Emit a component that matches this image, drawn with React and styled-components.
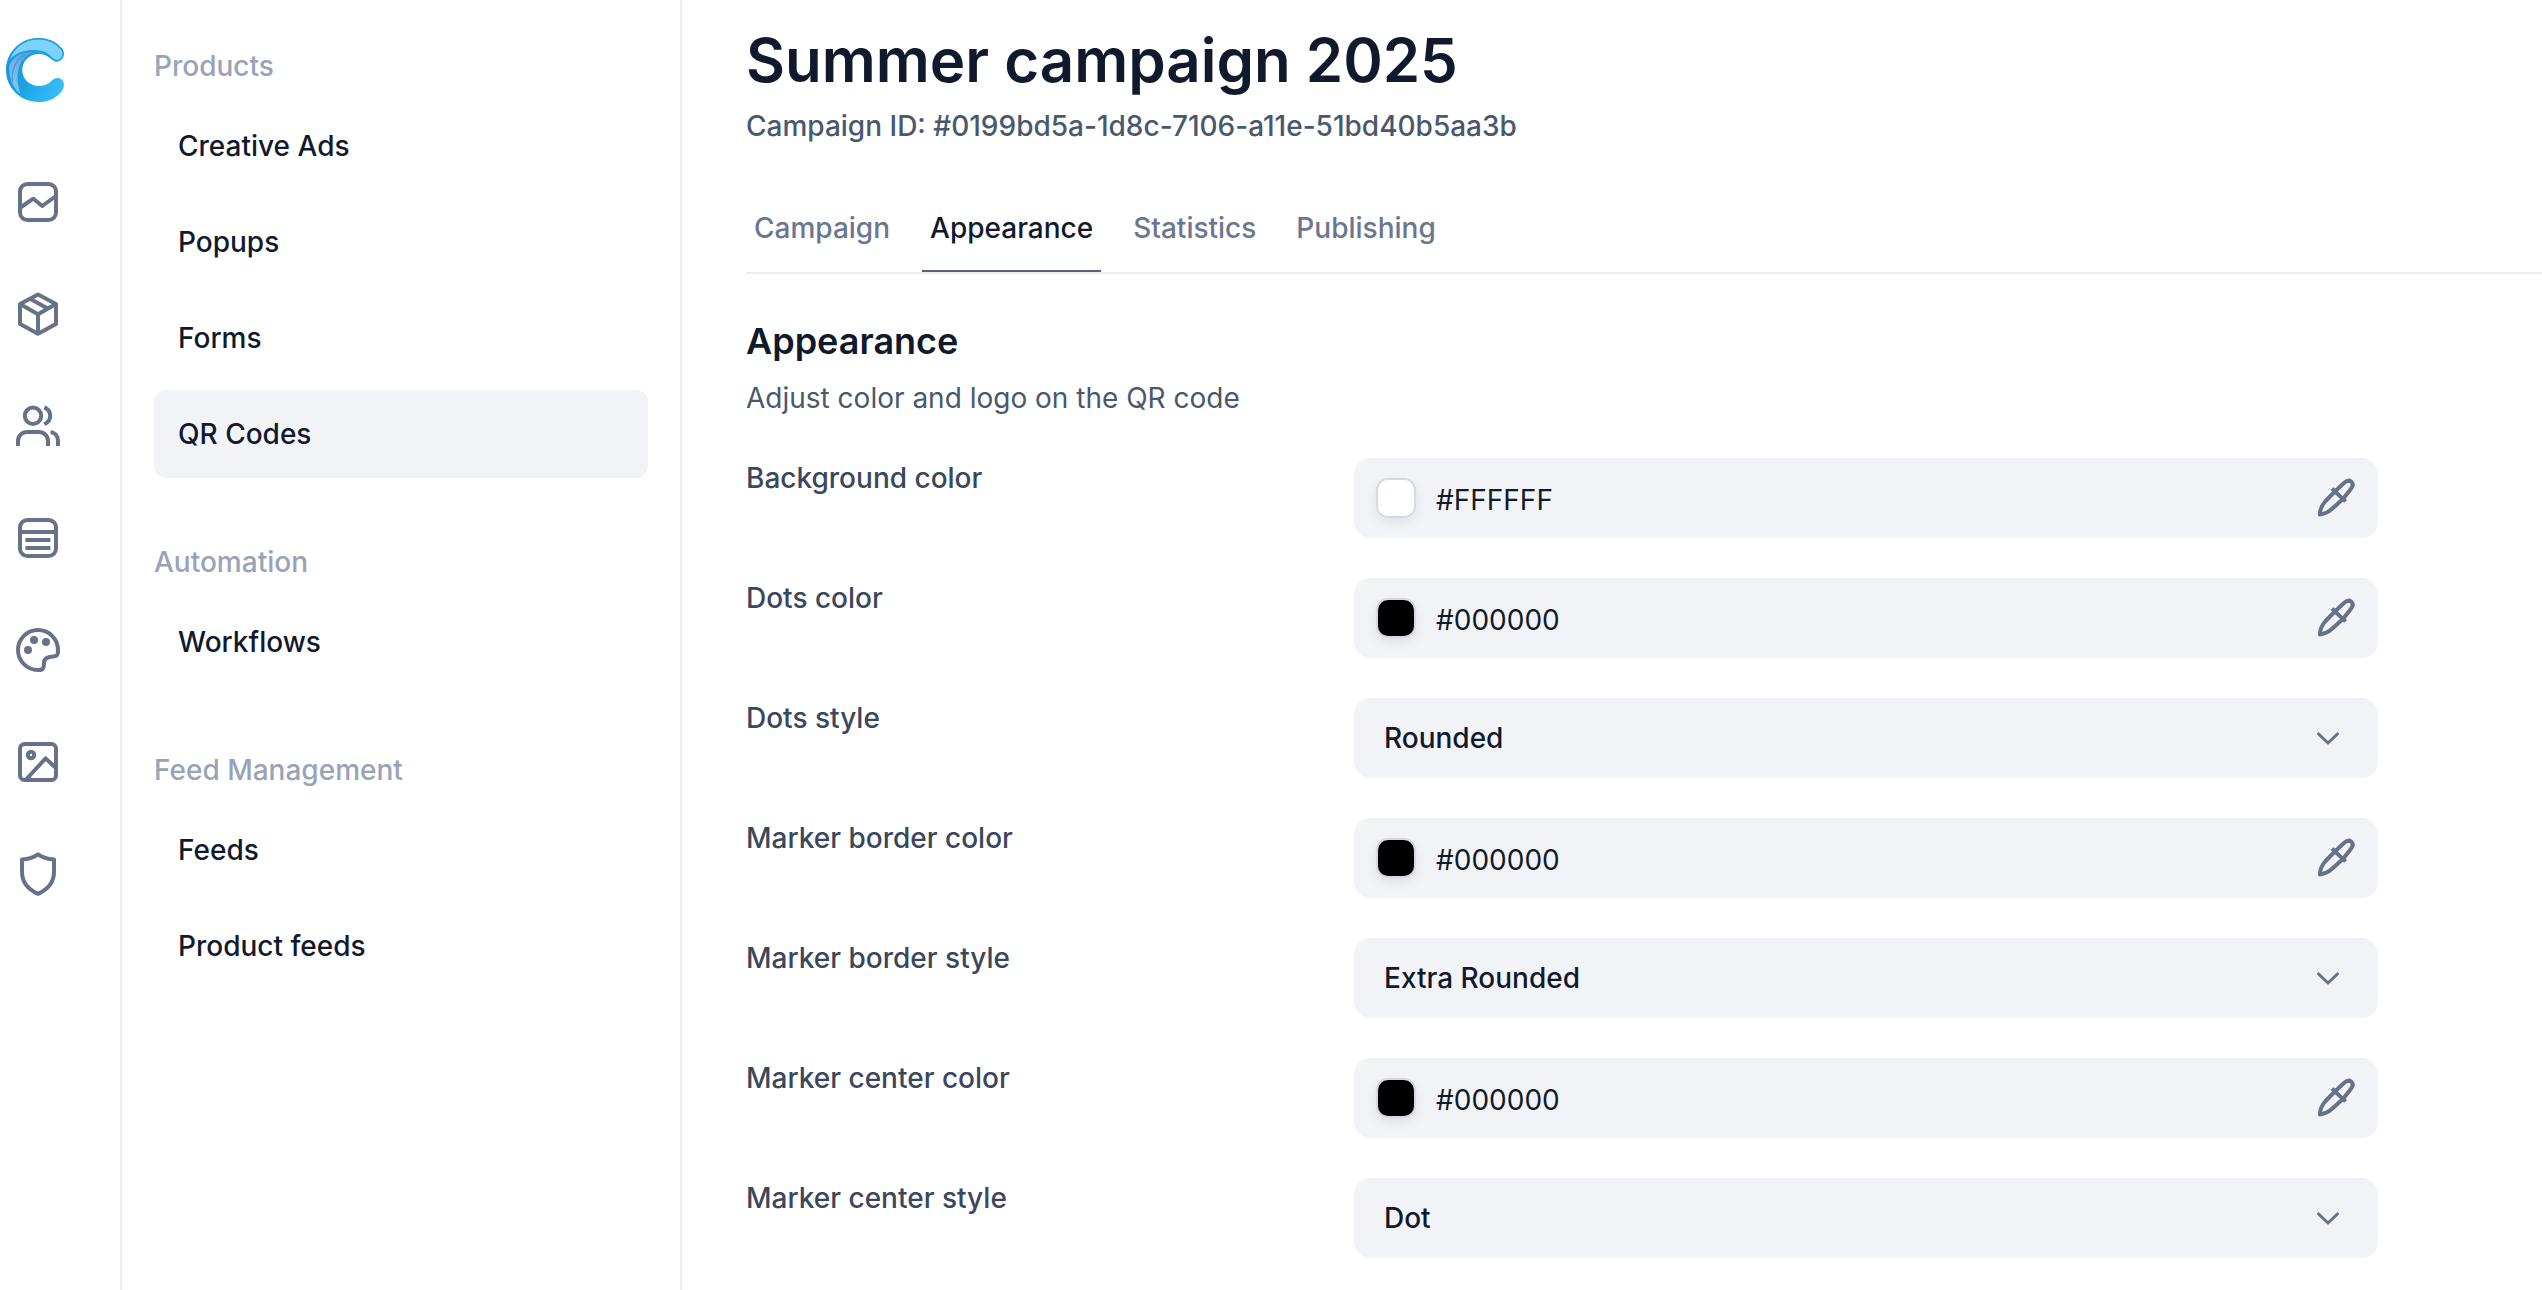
import React, { useState } from "react"
import styled, { createGlobalStyle } from "styled-components"

const products = ["Creative Ads", "Popups", "Forms", "QR Codes"]

const groups = [
  { title: "Products", items: products },
  { title: "Automation", items: ["Workflows"] },
  { title: "Feed Management", items: ["Feeds", "Product feeds"] },
]

const tabs = ["Campaign", "Appearance", "Statistics", "Publishing"]

const dotStyles = ["Rounded", "Square", "Dots", "Classy"]
const borderStyles = ["Extra Rounded", "Square", "Dot"]
const centerStyles = ["Dot", "Square", "Rounded"]

const fields = [
  { id: "background-color", label: "Background color", color: "#FFFFFF" },
  { id: "dots-color", label: "Dots color", color: "#000000" },
  { id: "dots-style", label: "Dots style", options: dotStyles },
  { id: "marker-border-color", label: "Marker border color", color: "#000000" },
  { id: "marker-border-style", label: "Marker border style", options: borderStyles },
  { id: "marker-center-color", label: "Marker center color", color: "#000000" },
  { id: "marker-center-style", label: "Marker center style", options: centerStyles },
]

const railIcons = [
  {
    name: "Dashboard",
    shape: (
      <>
        <rect x="6" y="6" width="36" height="36" rx="7.5" />
        <path d="M6.5 29.5 19.3 20.7 28.3 28 42 18" />
      </>
    ),
  },
  {
    name: "Products",
    shape: (
      <path d="M24 4.4 42 14V34L24 43.8 6 34V14ZM6 14 24 24.2 42 14M24 24.2V43.8M16 8.8 33.6 18.6" />
    ),
  },
  {
    name: "Customers",
    shape: (
      <>
        <circle cx="19" cy="13.8" r="8.2" />
        <path d="M30.3 5.4C34 7 36.2 10 36.2 13.8S34 20.6 30.3 22.3" />
        <path d="M4 44V39a9 9 0 0 1 9-9H25a9 9 0 0 1 9 9V44" />
        <path d="M36.6 30C41 30.6 44 34 44 39V44" />
      </>
    ),
  },
  {
    name: "Lists",
    shape: (
      <>
        <rect x="6" y="6" width="36" height="36" rx="7.5" />
        <path d="M6 18H42M11.4 26H36.4M11.4 34H36.4" />
      </>
    ),
  },
  {
    name: "Design",
    shape: (
      <>
        <path d="M24 44A20 20 0 1 1 44 24C44.6 28.6 42.8 30.4 39 30.4 34 30.6 30 32 30 37 30 41.4 29.6 44.4 24 44Z" />
        <g fill="currentColor" stroke="none">
          <circle cx="20" cy="14" r="4" />
          <circle cx="32" cy="16" r="4" />
          <circle cx="14" cy="24" r="4" />
        </g>
      </>
    ),
  },
  {
    name: "Media",
    shape: (
      <>
        <rect x="6" y="6" width="36" height="36" rx="4.5" />
        <circle cx="17" cy="17" r="3.2" />
        <path d="M11.6 42 31.6 20.4 42 30" />
      </>
    ),
  },
  {
    name: "Security",
    shape: (
      <path d="M24 4.4C19.6 7.6 13.6 9.2 8 9.6V22C8 32 14.6 39.6 24 43.8 33.4 39.6 40 32 40 22V9.6C34.4 9.2 28.4 7.6 24 4.4Z" />
    ),
  },
]

const LogoMark = () => (
  <svg width="58" height="64" viewBox="0 0 58 64" aria-hidden="true">
    <defs>
      <linearGradient id="logo-base" x1="0" y1="0.3" x2="1" y2="0.8">
        <stop offset="0" stopColor="#1590dc" />
        <stop offset="0.4" stopColor="#1aa2e4" />
        <stop offset="1" stopColor="#3ac0fb" />
      </linearGradient>
      <linearGradient id="logo-edge" x1="0" y1="1" x2="0.7" y2="0">
        <stop offset="0" stopColor="#8ccdf2" />
        <stop offset="1" stopColor="#5f9fdc" />
      </linearGradient>
    </defs>
    <path
      fill="url(#logo-base)"
      d="M56.5 11C51 4 42 0 32.5 0 14.5 0 0 14.3 0 32S14.5 64 32.5 64C42 64 50 60.4 55.6 53.4 58.4 49.8 59 44.8 56 41.8 53 38.8 48.4 39.8 45.4 43 42 46.4 38 48 33 48 23.6 48 16.3 41 16.3 32S23.6 16 32.5 16C37 16 41 17.6 44 20.2 46.8 22.8 51 25 54.4 22.5 58 20 59 14.8 56.5 11Z"
    />
    <path
      fill="url(#logo-edge)"
      d="M3.4 27C8 18 16 13.600 27 14.400 14 19 7.600 34 14.400 56 7 50 2.400 40 3.400 27Z"
    />
    <path
      fill="none"
      stroke="#3c9bde"
      strokeWidth="1.2"
      d="M6.400 44C5 32 9.600 21 20 16.400"
    />
    <path
      fill="#7bd2fc"
      stroke="#1d9fe3"
      strokeWidth="1.4"
      d="M2 25C6 10 18 .8 32.5.8 42 .8 50.400 4.600 55.800 11.600 58 15 57.400 19.400 54 21.800 51 24 47.600 22 45 19.400 41 14.600 34.600 12.600 27 12.800 16 13.200 7 17 2 25Z"
    />
  </svg>
)

const ColorField = ({ id, initial }) => {
  const [value, setValue] = useState(initial)

  return (
    <ColorBox>
      <Swatch
        type="color"
        aria-label="Pick color"
        value={/^#[0-9a-f]{6}$/i.test(value) ? value : initial}
        onChange={e => setValue(e.target.value.toUpperCase())}
      />
      <HexInput id={id} value={value} onChange={e => setValue(e.target.value)} />
      <IconButton type="button" aria-label="Eyedropper">
        <LineIcon size={40} viewBox="0 0 40 40" aria-hidden="true">
          <path d="M16 10.600 29.600 23.400" />
          <path d="M19.400 13 28.600 4.600C31.400 2.200 34 2.400 35.400 3.800 37 5.400 37.200 8 35 10.800L27.400 20.600" />
          <path d="M19.400 13 9.600 23C5.400 27.600 4 31.600 3.800 36.400 8.400 36.200 12 34.600 16.400 30.600L27.400 20.600" />
        </LineIcon>
      </IconButton>
    </ColorBox>
  )
}

const SelectField = ({ id, options }) => (
  <SelectBox>
    <Select id={id}>
      {options.map(option => (
        <option key={option}>{option}</option>
      ))}
    </Select>
    <SelectIcon size={40} viewBox="0 0 40 40" aria-hidden="true">
      <path d="M9.600 15 20 25 30.400 15" />
    </SelectIcon>
  </SelectBox>
)

const App = () => (
  <Page>
    <GlobalStyle />
    <Rail aria-label="Main">
      <Logo href="#" aria-label="Home">
        <LogoMark />
      </Logo>
      {railIcons.map(icon => (
        <RailLink key={icon.name} href="#" aria-label={icon.name}>
          <LineIcon size={48} viewBox="0 0 48 48" aria-hidden="true">
            {icon.shape}
          </LineIcon>
        </RailLink>
      ))}
    </Rail>
    <Sidebar aria-label="Sections">
      {groups.map(group => (
        <Group key={group.title}>
          <GroupTitle>{group.title}</GroupTitle>
          {group.items.map(item => (
            <NavLink key={item} href="#" $active={item === "QR Codes"}>
              {item}
            </NavLink>
          ))}
        </Group>
      ))}
    </Sidebar>
    <Main>
      <Title>Summer campaign 2025</Title>
      <CampaignId>Campaign ID: #0199bd5a-1d8c-7106-a11e-51bd40b5aa3b</CampaignId>
      <Tabs>
        {tabs.map(tab => (
          <Tab key={tab} href="#" $active={tab === "Appearance"}>
            {tab}
          </Tab>
        ))}
      </Tabs>
      <Heading>Appearance</Heading>
      <Description>Adjust color and logo on the QR code</Description>
      <Form>
        {fields.map(field => (
          <Row key={field.id}>
            <Label htmlFor={field.id}>{field.label}</Label>
            {field.color ? (
              <ColorField id={field.id} initial={field.color} />
            ) : (
              <SelectField id={field.id} options={field.options} />
            )}
          </Row>
        ))}
      </Form>
    </Main>
  </Page>
)

export default App

const GlobalStyle = createGlobalStyle`
  * {
    box-sizing: border-box;
  }

  body {
    margin: 0;
    background: #fff;
    color: #111a2c;
    font-family: Inter, "Liberation Sans", sans-serif;
    font-size: 28px;
    line-height: 40px;
    -webkit-font-smoothing: antialiased;
  }

  a {
    color: inherit;
    text-decoration: none;
  }
`

const Page = styled.div`
  display: flex;
  min-height: 100vh;
`

const Rail = styled.nav`
  display: flex;
  flex-direction: column;
  flex: none;
  gap: 64px;
  width: 122px;
  padding: 38px 0 32px 14px;
  border-right: 2px solid #ecedf3;
`

const Logo = styled.a`
  display: flex;
  height: 76px;
  margin-left: -8px;
`

const RailLink = styled.a`
  display: flex;
  width: 48px;
`

const LineIcon = styled.svg.attrs(props => ({
  width: props.size,
  height: props.size,
}))`
  display: block;
  fill: none;
  stroke: currentColor;
  stroke-width: 4;
  stroke-linejoin: round;
  color: #67728a;
`

const Sidebar = styled.nav`
  display: flex;
  flex-direction: column;
  flex: none;
  gap: 64px;
  width: 560px;
  padding: 46px 32px;
  border-right: 2px solid #ecedf3;
`

const Group = styled.div`
  display: flex;
  flex-direction: column;
  gap: 8px;
`

const GroupTitle = styled.div`
  margin-bottom: 8px;
  font-weight: 500;
  color: #99a3b7;
`

const NavLink = styled.a`
  padding: 24px;
  border-radius: 12px;
  font-weight: 500;
  background: ${props => (props.$active ? "#f2f3f7" : "transparent")};
`

const Main = styled.main`
  flex: 1;
  min-width: 0;
  padding: 20px 0 32px 64px;
`

const Title = styled.h1`
  margin: 0 0 6px;
  font-size: 60px;
  font-weight: 600;
  line-height: 80px;
`

const CampaignId = styled.p`
  margin: 0;
  font-weight: 500;
  color: #4a586d;
`

const Tabs = styled.nav`
  display: flex;
  gap: 24px;
  margin-top: 38px;
  border-bottom: 2px solid #ecedf3;
`

const Tab = styled.a`
  padding: 24px 8px;
  font-weight: 500;
  color: ${props => (props.$active ? "#111a2c" : "#6b7690")};
  box-shadow: ${props => (props.$active ? "inset 0 -2px #56617a" : "none")};
`

const Heading = styled.h2`
  margin: 43px 0 13px;
  font-size: 36px;
  font-weight: 600;
  line-height: 48px;
`

const Description = styled.p`
  margin: 0 0 40px;
  color: #4a586d;
`

const Form = styled.form`
  display: flex;
  flex-direction: column;
  gap: 40px;
  max-width: 1632px;
  margin-right: 32px;
`

const Row = styled.div`
  display: grid;
  grid-template-columns: minmax(0, 608fr) minmax(0, 1024fr);
  align-items: start;
`

const Label = styled.label`
  font-weight: 500;
  color: #3b475c;
`

const ColorBox = styled.div`
  display: flex;
  align-items: center;
  gap: 20px;
  height: 80px;
  padding: 0 22px;
  border-radius: 16px;
  background: #f2f3f7;
`

const Swatch = styled.input`
  flex: none;
  width: 40px;
  height: 40px;
  padding: 0;
  border: 2px solid #d5d9e2;
  border-radius: 12px;
  background: none;
  box-shadow: 0 4px 12px rgba(15, 23, 40, 0.08);
  appearance: none;
  overflow: hidden;
  cursor: pointer;

  &::-webkit-color-swatch-wrapper {
    padding: 0;
  }

  &::-webkit-color-swatch {
    border: none;
    border-radius: 0;
  }
`

const HexInput = styled.input`
  flex: 1;
  min-width: 0;
  padding: 4px 0 0;
  border: none;
  outline: none;
  background: none;
  color: inherit;
  font: inherit;
`

const IconButton = styled.button`
  display: flex;
  padding: 0;
  border: none;
  background: none;
  cursor: pointer;
`

const SelectBox = styled.div`
  display: grid;
  align-items: center;
`

const Select = styled.select`
  grid-area: 1 / 1;
  width: 100%;
  height: 80px;
  padding: 0 80px 0 30px;
  border: none;
  border-radius: 16px;
  background: #f2f3f7;
  color: inherit;
  font: inherit;
  font-weight: 500;
  appearance: none;
`

const SelectIcon = styled(LineIcon)`
  grid-area: 1 / 1;
  justify-self: end;
  margin-right: 30px;
  stroke-width: 3;
  pointer-events: none;
`
